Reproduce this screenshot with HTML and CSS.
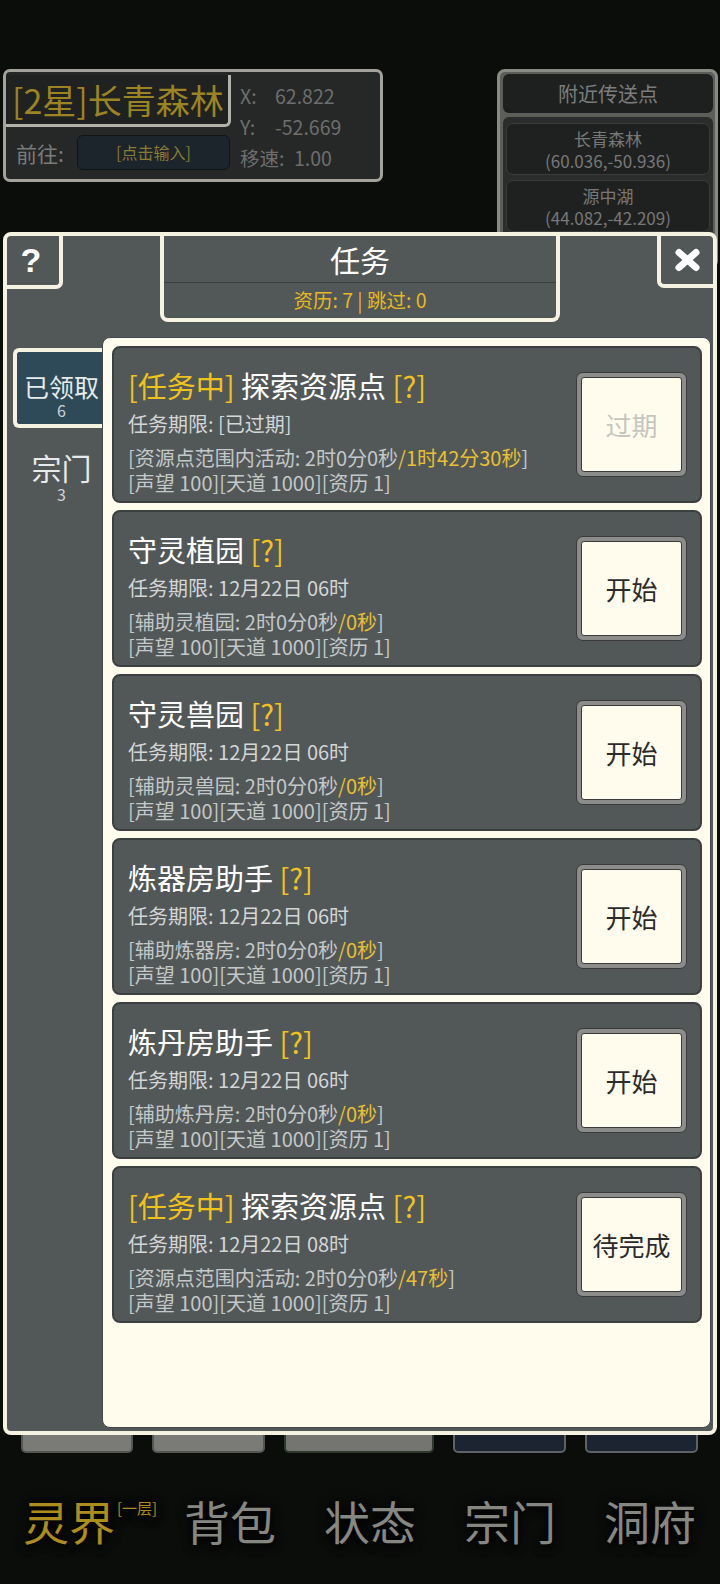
FILE: index.html
```html
<!DOCTYPE html>
<html lang="zh-CN">
<head>
<meta charset="utf-8">
<title>任务</title>
<link rel="stylesheet" href="styles.css">
</head>
<body>
<div class="screen">
  <div class="hud">
    <div class="loc-panel">
      <div class="loc-left">
        <div class="loc-title">[2星]长青森林</div>
        <div class="goto">
          <span class="goto-label">前往:</span>
          <div class="goto-input">[点击输入]</div>
        </div>
      </div>
      <div class="coords">
        <div class="coord"><span class="ck">X:</span><span>62.822</span></div>
        <div class="coord"><span class="ck">Y:</span><span>-52.669</span></div>
        <div class="coord"><span class="ck wide">移速:</span><span>1.00</span></div>
      </div>
    </div>
    <div class="tp-panel">
      <div class="tp-head">附近传送点</div>
      <div class="tp-list">
        <div class="tp-item">长青森林<br>(60.036,-50.936)</div>
        <div class="tp-item">源中湖<br>(44.082,-42.209)</div>
      </div>
    </div>
  </div>

  <div class="bottom">
    <div class="nav-btns">
      <div class="nb nb-gray w1"></div>
      <div class="nb nb-gray w2"></div>
      <div class="nb nb-green w3"></div>
      <div class="nb nb-dark w4"></div>
      <div class="nb nb-dark w5"></div>
    </div>
    <nav class="nav">
      <div class="nav-item active">灵界<span class="floor">[一层]</span></div>
      <div class="nav-item">背包</div>
      <div class="nav-item">状态</div>
      <div class="nav-item">宗门</div>
      <div class="nav-item">洞府</div>
    </nav>
  </div>
</div>

<div class="modal">
  <div class="m-head">
    <div class="help">?</div>
    <div class="title-box">
      <div class="t-main">任务</div>
      <div class="t-sub">资历: 7 | 跳过: 0</div>
    </div>
    <div class="close">
      <svg width="27" height="24" viewBox="0 0 27 24">
        <path d="M5 4.5 L22 19.5 M22 4.5 L5 19.5" stroke="#ffffff" stroke-width="7" stroke-linecap="round" fill="none"/>
      </svg>
    </div>
  </div>
  <div class="m-body">
    <div class="tabs">
      <div class="tab active"><div class="tab-name">已领取</div><div class="tab-count">6</div></div>
      <div class="tab"><div class="tab-name big">宗门</div><div class="tab-count">3</div></div>
    </div>
    <div class="panel">
      <div class="card">
        <div class="info">
          <div class="c-title"><span class="gold">[任务中]</span> 探索资源点 <span class="gold">[?]</span></div>
          <div class="c-limit">任务期限: [已过期]</div>
          <div class="c-req">[资源点范围内活动: 2时0分0秒<span class="gold">/1时42分30秒</span>]<br>[声望 100][天道 1000][资历 1]</div>
        </div>
        <div class="btn dis"><div class="btn-in">过期</div></div>
      </div>
      <div class="card">
        <div class="info">
          <div class="c-title">守灵植园 <span class="gold">[?]</span></div>
          <div class="c-limit">任务期限: 12月22日 06时</div>
          <div class="c-req">[辅助灵植园: 2时0分0秒<span class="gold">/0秒</span>]<br>[声望 100][天道 1000][资历 1]</div>
        </div>
        <div class="btn"><div class="btn-in">开始</div></div>
      </div>
      <div class="card">
        <div class="info">
          <div class="c-title">守灵兽园 <span class="gold">[?]</span></div>
          <div class="c-limit">任务期限: 12月22日 06时</div>
          <div class="c-req">[辅助灵兽园: 2时0分0秒<span class="gold">/0秒</span>]<br>[声望 100][天道 1000][资历 1]</div>
        </div>
        <div class="btn"><div class="btn-in">开始</div></div>
      </div>
      <div class="card">
        <div class="info">
          <div class="c-title">炼器房助手 <span class="gold">[?]</span></div>
          <div class="c-limit">任务期限: 12月22日 06时</div>
          <div class="c-req">[辅助炼器房: 2时0分0秒<span class="gold">/0秒</span>]<br>[声望 100][天道 1000][资历 1]</div>
        </div>
        <div class="btn"><div class="btn-in">开始</div></div>
      </div>
      <div class="card">
        <div class="info">
          <div class="c-title">炼丹房助手 <span class="gold">[?]</span></div>
          <div class="c-limit">任务期限: 12月22日 06时</div>
          <div class="c-req">[辅助炼丹房: 2时0分0秒<span class="gold">/0秒</span>]<br>[声望 100][天道 1000][资历 1]</div>
        </div>
        <div class="btn"><div class="btn-in">开始</div></div>
      </div>
      <div class="card">
        <div class="info">
          <div class="c-title"><span class="gold">[任务中]</span> 探索资源点 <span class="gold">[?]</span></div>
          <div class="c-limit">任务期限: 12月22日 08时</div>
          <div class="c-req">[资源点范围内活动: 2时0分0秒<span class="gold">/47秒</span>]<br>[声望 100][天道 1000][资历 1]</div>
        </div>
        <div class="btn"><div class="btn-in">待完成</div></div>
      </div>
    </div>
  </div>
</div>
</body>
</html>
```

FILE: styles.css
```css
html, body {
  margin: 0;
  padding: 0;
}
body {
  width: 720px;
  height: 1584px;
  position: relative;
  overflow: hidden;
  background: #0b0d0b;
  font-family: "Noto Sans CJK SC", "Noto Sans", sans-serif;
}
.screen {
  height: 1584px;
  display: flex;
  flex-direction: column;
}

/* ---------- HUD ---------- */
.hud {
  display: flex;
  justify-content: space-between;
  align-items: flex-start;
  padding: 69px 2px 0 3px;
}
.loc-panel {
  width: 380px;
  height: 113px;
  box-sizing: border-box;
  border: 3px solid #a3a39b;
  border-radius: 7px;
  background: #252827;
  display: flex;
}
.loc-left {
  width: 225px;
}
.loc-title {
  margin-top: 3px;
  width: 225px;
  height: 52px;
  box-sizing: border-box;
  border-right: 3px solid #b3b3ab;
  border-bottom: 3px solid #b3b3ab;
  border-bottom-right-radius: 6px;
  background: #1f2221;
  padding-left: 6px;
  font-size: 34px;
  line-height: 49px;
  color: #9b8421;
  white-space: nowrap;
  overflow: hidden;
}
.goto {
  display: flex;
  align-items: center;
  margin-top: 8px;
  height: 35px;
  padding-left: 10px;
}
.goto-label {
  width: 61px;
  font-size: 21px;
  color: #7b7b7b;
}
.goto-input {
  width: 153px;
  height: 35px;
  box-sizing: border-box;
  background: #1b252b;
  border: 1px solid #101416;
  border-radius: 6px;
  font-size: 16px;
  line-height: 33px;
  color: #8b7b34;
  text-align: center;
}
.coords {
  padding: 8px 0 0 9px;
  font-size: 19.5px;
  line-height: 31px;
  color: #6e6e6e;
}
.ck {
  display: inline-block;
  width: 35px;
}
.ck.wide {
  width: 54px;
}

.tp-panel {
  width: 221px;
  height: 200px;
  box-sizing: border-box;
  border: 3px solid #8a8a84;
  border-radius: 8px;
  background: #5c5e5a;
  padding: 2px 2px 0 3px;
}
.tp-head {
  height: 39px;
  background: #1e201f;
  border-radius: 6px;
  text-align: center;
  font-size: 20px;
  line-height: 39px;
  color: #7c7c7c;
}
.tp-list {
  margin-top: 4px;
  background: #2b2d2c;
  border-radius: 6px;
  padding: 6px 3px;
  display: flex;
  flex-direction: column;
  gap: 5px;
}
.tp-item {
  height: 52px;
  box-sizing: border-box;
  background: #1f2120;
  border: 1px solid #3a3c3a;
  border-radius: 7px;
  text-align: center;
  font-size: 17px;
  line-height: 22px;
  padding-top: 4px;
  color: #787878;
}

/* ---------- bottom nav ---------- */
.bottom {
  margin-top: auto;
  padding-bottom: 34px;
}
.nav-btns {
  display: flex;
  height: 44px;
  padding-left: 21px;
  gap: 19px;
}
.nb {
  box-sizing: border-box;
  height: 44px;
  border-radius: 5px;
  border: 2px solid #555654;
}
.w1 { width: 112px; }
.w2 { width: 113px; }
.w3 { width: 150px; }
.w4 { width: 113px; }
.w5 { width: 113px; }
.nb-gray { background: #7a7a76; }
.nb-green { background: #747470; border-color: #2b3a2b; }
.nb-dark { background: #1b2430; border-color: #5e6264; }

.nav {
  margin-top: 37px;
  margin-left: 20px;
  display: grid;
  grid-template-columns: repeat(5, 140px);
}
.nav-item {
  text-align: center;
  font-size: 46px;
  line-height: 60px;
  height: 60px;
  color: #878782;
  text-shadow: 0 4px 8px #000, 0 0 12px #000;
  white-space: nowrap;
}
.nav-item.active {
  color: #ad8d1c;
}
.floor {
  display: inline-block;
  vertical-align: top;
  font-size: 15px;
  line-height: 15px;
  padding-top: 10px;
  margin-left: 2px;
}

/* ---------- modal ---------- */
.modal {
  position: absolute;
  left: 3px;
  top: 232px;
  width: 714px;
  height: 1203px;
  box-sizing: border-box;
  border: 4px solid #f6f2e2;
  border-radius: 8px;
  background: #525757;
  display: flex;
  flex-direction: column;
}
.m-head {
  display: flex;
  align-items: flex-start;
  height: 86px;
  flex-shrink: 0;
}
.help {
  width: 56px;
  height: 53px;
  box-sizing: border-box;
  border-right: 4px solid #f6f2e2;
  border-bottom: 4px solid #f6f2e2;
  border-bottom-right-radius: 7px;
  display: flex;
  align-items: center;
  justify-content: center;
  padding-right: 4px;
  font-family: "Liberation Sans", Arial, sans-serif;
  font-weight: bold;
  font-size: 34px;
  color: #ffffff;
}
.title-box {
  margin-left: 97px;
  width: 400px;
  height: 86px;
  box-sizing: border-box;
  border: 4px solid #f6f2e2;
  border-top: none;
  border-radius: 0 0 8px 8px;
  display: flex;
  flex-direction: column;
}
.t-main {
  height: 47px;
  flex-shrink: 0;
  box-sizing: border-box;
  border-bottom: 1px solid #3b3f3f;
  text-align: center;
  font-size: 30px;
  line-height: 47px;
  color: #ffffff;
}
.t-sub {
  flex: 1;
  text-align: center;
  font-size: 19.5px;
  line-height: 34px;
  color: #e6b91e;
}
.close {
  margin-left: auto;
  width: 56px;
  height: 52px;
  box-sizing: border-box;
  border-left: 4px solid #f6f2e2;
  border-bottom: 4px solid #f6f2e2;
  border-bottom-left-radius: 7px;
  display: flex;
  align-items: center;
  justify-content: center;
}
.close svg {
  display: block;
}

.m-body {
  flex: 1;
  display: flex;
  min-height: 0;
}
.tabs {
  width: 95px;
  flex-shrink: 0;
  padding-top: 26px;
  display: flex;
  flex-direction: column;
}
.tab {
  margin-left: 6px;
  width: 89px;
  height: 80px;
  box-sizing: border-box;
  padding: 24px 0 0 8px;
  text-align: center;
  color: #e6eaea;
}
.tab.active {
  border: 4px solid #f6f2e2;
  border-right: none;
  border-radius: 6px 0 0 6px;
  background: #2e4a59;
  padding: 21px 0 0 4px;
}
.tab-name {
  font-size: 25px;
  line-height: 26px;
  white-space: nowrap;
}
.tab-name.big {
  font-size: 30px;
  line-height: 30px;
}
.tab-count {
  font-size: 16px;
  line-height: 18px;
  margin-top: 2px;
  color: #cdd3d3;
}
.tab:not(.active) .tab-count {
  margin-top: 3px;
}

.panel {
  flex: 1;
  margin: 15px 2px 3px 0;
  background: #fffcee;
  border: 1px solid #44484a;
  border-radius: 8px;
  padding: 8px 8px 8px 9px;
  display: flex;
  flex-direction: column;
  gap: 7px;
}
.card {
  height: 157px;
  flex-shrink: 0;
  box-sizing: border-box;
  border: 2px solid #3b3f3f;
  border-radius: 8px;
  background: #525858;
  display: flex;
  align-items: center;
  padding: 0 13px 0 14px;
}
.info {
  align-self: flex-start;
  flex: 1;
  min-width: 0;
  padding-top: 19px;
}
.c-title {
  font-size: 29px;
  line-height: 36px;
  color: #ffffff;
  white-space: nowrap;
}
.c-limit {
  margin-top: 7px;
  font-size: 20px;
  line-height: 28px;
  color: #d4d6d6;
  white-space: nowrap;
}
.c-req {
  margin-top: 7px;
  font-size: 20px;
  line-height: 25px;
  color: #c4c8c8;
  white-space: nowrap;
}
.gold {
  color: #f1c21a;
}
.c-req .gold {
  color: #e9c030;
}
.btn {
  width: 111px;
  height: 105px;
  flex-shrink: 0;
  box-sizing: border-box;
  border: 1px solid #3a3a3a;
  border-radius: 7px;
  background: #8c8d8a;
  padding: 4px;
}
.btn-in {
  height: 100%;
  box-sizing: border-box;
  border: 1.5px solid #3a3a3a;
  border-radius: 3px;
  background: #fffcee;
  display: flex;
  align-items: center;
  justify-content: center;
  font-size: 26px;
  color: #2b2b2b;
  white-space: nowrap;
}
.btn.dis .btn-in {
  color: #c5c5c0;
}
```
